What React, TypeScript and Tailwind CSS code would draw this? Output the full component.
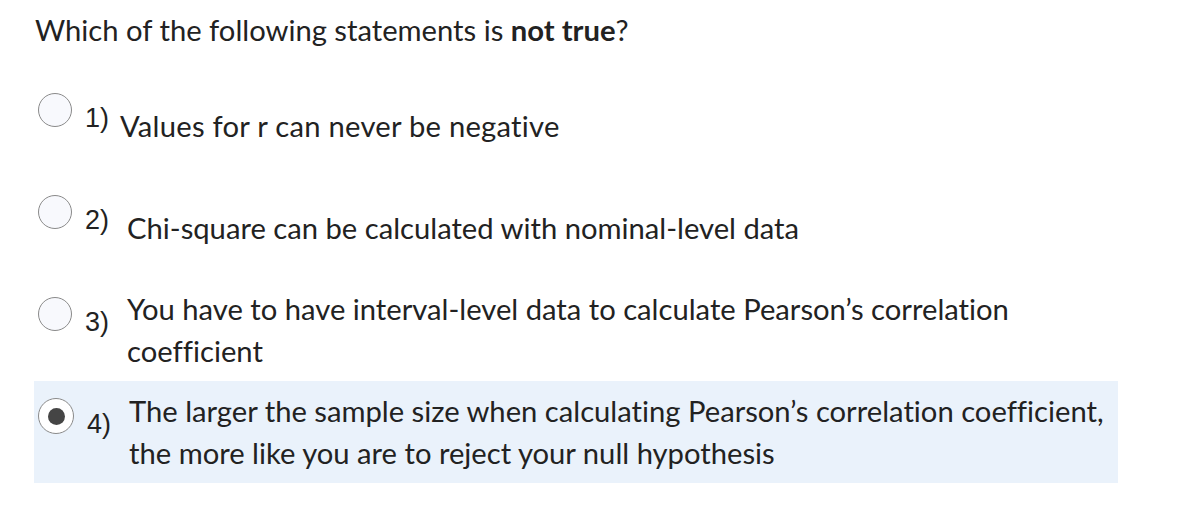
import React from "react";

const options = [
  { n: "1)", text: "Values for r can never be negative", selected: false, shift: true },
  { n: "2)", text: "Chi-square can be calculated with nominal-level data", selected: false, shift: false },
  { n: "3)", text: "You have to have interval-level data to calculate Pearson\u2019s correlation coefficient", selected: false, shift: false },
  { n: "4)", text: "The larger the sample size when calculating Pearson\u2019s correlation coefficient, the more like you are to reject your null hypothesis", selected: true, shift: false },
];

function Radio({ selected }: { selected: boolean }) {
  return selected ? (
    <div className="w-[36px] h-[36px] rounded-full border border-[#8a8a8a] bg-white flex items-center justify-center shrink-0 mb-[32px]">
      <div className="w-[17px] h-[17px] rounded-full bg-[#454545]" />
    </div>
  ) : (
    <div className="w-[34px] h-[34px] rounded-full border border-[#8a8a8a] bg-[#f8f9fd] shrink-0 mb-[32px]" />
  );
}

export default function App() {
  return (
    <div
      className="w-[1198px] h-[526px] bg-white text-[#222222] [font-variant-ligatures:none]"
      style={{ fontFamily: "Lato, 'Noto Sans', sans-serif" }}
    >
      <div className="pl-[35px] pt-[9px]">
        <div className="text-[29.2px] leading-[42px]">
          Which of the following statements is <span className="font-bold">not true</span>?
        </div>
      </div>
      <div className="mt-[24px] w-[1084px] ml-[34px]">
        {options.map((o) => (
          <div key={o.n} className={`h-[102px] flex items-center pl-[4px] ${o.selected ? "bg-[#eaf2fb]" : ""}`}>
            <Radio selected={o.selected} />
            <div
              className={`${o.shift ? "w-[48px]" : "w-[55px]"} pl-[13px] text-[27px] leading-[30px] shrink-0 mb-[16px]`}
              style={{ fontFamily: "'Liberation Sans', Arial, sans-serif" }}
            >
              {o.n}
            </div>
            <div className={`text-[29.2px] leading-[42px] w-[985px] ${o.shift ? "tracking-[0.25px]" : ""}`}>{o.text}</div>
          </div>
        ))}
      </div>
    </div>
  );
}
